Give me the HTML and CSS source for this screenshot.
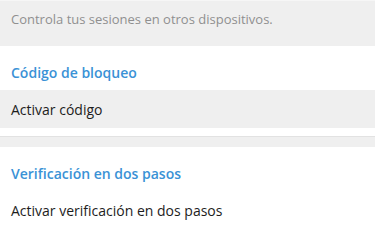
FILE: index.html
```html
<!DOCTYPE html>
<html lang="es">
<head>
<meta charset="utf-8">
<link rel="stylesheet" href="styles.css">
</head>
<body>
  <div class="hint">Controla tus sesiones en otros dispositivos.</div>
  <section class="section">
    <div class="section-title">Código de bloqueo</div>
    <div class="row row-active">Activar código</div>
  </section>
  <div class="divider"></div>
  <section class="section">
    <div class="section-title">Verificación en dos pasos</div>
    <div class="row">Activar verificación en dos pasos</div>
  </section>
</body>
</html>
```
FILE: styles.css
```css
html, body {
  margin: 0;
  padding: 0;
  background: #ffffff;
  font-family: "Open Sans", "Noto Sans", sans-serif;
  font-size: 14px;
  width: 375px;
  overflow: hidden;
}
.hint {
  height: 46px;
  box-sizing: border-box;
  padding: 0 11px 9px;
  display: flex;
  align-items: center;
  background: #efefef;
  color: #8f8f8f;
  font-size: 13px;
  box-shadow: inset 0 1px 0 #f6f6f6;
}
.section {
  background: #ffffff;
  padding-bottom: 8px;
}
.section-title {
  height: 44px;
  box-sizing: border-box;
  padding: 8px 11px 0;
  display: flex;
  align-items: center;
  color: #3a92d6;
  font-weight: 600;
}
.row {
  height: 38px;
  padding: 0 11px;
  display: flex;
  align-items: center;
  color: #1d1d1d;
}
.row-active {
  background: #efefef;
}
.divider {
  height: 11px;
  background: #efefef;
  border-top: 1px solid #e2e2e2;
  box-sizing: border-box;
}
```
